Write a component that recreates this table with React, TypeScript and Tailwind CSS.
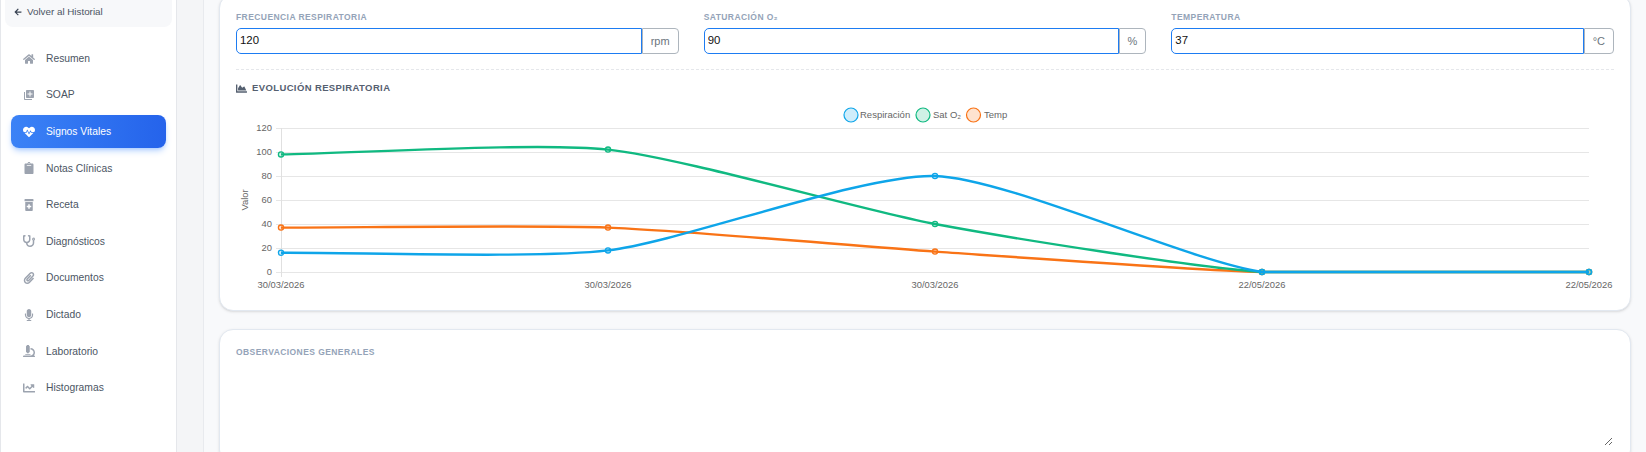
import React from 'react';
import {
  FaHome,
  FaHeartbeat,
  FaClipboard,
  FaPrescriptionBottleAlt,
  FaStethoscope,
  FaPaperclip,
  FaMicrophone,
  FaMicroscope,
  FaChartLine,
  FaChartArea,
  FaArrowLeft,
} from 'react-icons/fa';
import { MdLibraryAdd } from 'react-icons/md';

const navItems = [
  { label: 'Resumen', icon: FaHome },
  { label: 'SOAP', icon: MdLibraryAdd },
  { label: 'Signos Vitales', icon: FaHeartbeat, active: true },
  { label: 'Notas Clínicas', icon: FaClipboard },
  { label: 'Receta', icon: FaPrescriptionBottleAlt },
  { label: 'Diagnósticos', icon: FaStethoscope },
  { label: 'Documentos', icon: FaPaperclip },
  { label: 'Dictado', icon: FaMicrophone },
  { label: 'Laboratorio', icon: FaMicroscope },
  { label: 'Histogramas', icon: FaChartLine },
];

const fields = [
  { label: 'Frecuencia respiratoria', value: '120', unit: 'rpm' },
  { label: 'Saturación O₂', value: '90', unit: '%' },
  { label: 'Temperatura', value: '37', unit: '°C' },
];

// chart geometry (px inside the svg)
const W = 1378;
const H = 196;
const TOP = 28;
const BOTTOM = 172;
const LEFT = 45;
const RIGHT = 1353;
const xs = [45, 372, 699, 1026, 1353];
const yOf = (v: number) => BOTTOM - v * 1.2;
const dates = ['30/03/2026', '30/03/2026', '30/03/2026', '22/05/2026', '22/05/2026'];

const series = [
  { name: 'Respiración', color: '#0ea5e9', fill: 'rgba(14,165,233,0.2)', values: [16, 18, 80, 0, 0] },
  { name: 'Sat O₂', color: '#10b981', fill: 'rgba(16,185,129,0.2)', values: [98, 102, 40, 0, 0] },
  { name: 'Temp', color: '#f97316', fill: 'rgba(249,115,22,0.2)', values: [37, 37, 17, 0, 0] },
];

const clamp = (v: number, lo: number, hi: number) => Math.min(Math.max(v, lo), hi);

// same spline maths as chart.js line tension
function curve(values: number[], t = 0.22) {
  const pts = values.map((v, i) => ({ x: xs[i], y: yOf(v) }));
  const cps = pts.map((cur, i) => {
    const prev = pts[Math.max(i - 1, 0)];
    const next = pts[Math.min(i + 1, pts.length - 1)];
    const d01 = Math.hypot(cur.x - prev.x, cur.y - prev.y);
    const d12 = Math.hypot(next.x - cur.x, next.y - cur.y);
    let s01 = d01 / (d01 + d12);
    let s12 = d12 / (d01 + d12);
    if (isNaN(s01)) s01 = 0;
    if (isNaN(s12)) s12 = 0;
    const fa = t * s01;
    const fb = t * s12;
    return {
      px: clamp(cur.x - fa * (next.x - prev.x), LEFT, RIGHT),
      py: clamp(cur.y - fa * (next.y - prev.y), TOP, BOTTOM),
      nx: clamp(cur.x + fb * (next.x - prev.x), LEFT, RIGHT),
      ny: clamp(cur.y + fb * (next.y - prev.y), TOP, BOTTOM),
    };
  });
  let d = `M${pts[0].x},${pts[0].y}`;
  for (let i = 1; i < pts.length; i++) {
    d += ` C${cps[i - 1].nx},${cps[i - 1].ny} ${cps[i].px},${cps[i].py} ${pts[i].x},${pts[i].y}`;
  }
  return d;
}

const legend = [
  { cx: 615, tx: 624 },
  { cx: 687, tx: 697 },
  { cx: 737.5, tx: 748 },
];

const Chart: React.FC = () => (
  <svg width={W} height={H} className="block">
    {/* legend */}
    {series.map((s, i) => (
      <g key={s.name}>
        <circle cx={legend[i].cx} cy={15} r={7} fill={s.fill} stroke={s.color} strokeWidth={1.2} />
        <text x={legend[i].tx} y={18.3} fontSize={9.5} fill="#666">
          {s.name}
        </text>
      </g>
    ))}

    {/* y grid + ticks */}
    {[0, 20, 40, 60, 80, 100, 120].map((v) => (
      <g key={v}>
        <line x1={40} x2={RIGHT} y1={yOf(v) + 0.5} y2={yOf(v) + 0.5} stroke="#e6e6e6" strokeWidth={1} />
        <text x={36} y={yOf(v) + 3.3} fontSize={9.4} fill="#666" textAnchor="end">
          {v}
        </text>
      </g>
    ))}
    <line x1={LEFT + 0.5} x2={LEFT + 0.5} y1={TOP} y2={BOTTOM + 5} stroke="#e0e0e0" strokeWidth={1} />
    <text x={12} y={100} fontSize={9.4} fill="#666" textAnchor="middle" transform="rotate(-90 12 100)">
      Valor
    </text>

    {/* x labels */}
    {dates.map((d, i) => (
      <text key={i} x={xs[i]} y={188.3} fontSize={9.4} fill="#666" textAnchor="middle">
        {d}
      </text>
    ))}

    {/* datasets, first one drawn on top */}
    {[...series].reverse().map((s) => (
      <g key={s.name}>
        <path d={curve(s.values)} fill="none" stroke={s.color} strokeWidth={2.4} />
        {s.values.map((v, i) => (
          <circle key={i} cx={xs[i]} cy={yOf(v)} r={2.6} fill={s.fill} stroke={s.color} strokeWidth={1.3} />
        ))}
      </g>
    ))}
  </svg>
);

export default function App() {
  return (
    <div className="flex h-[452px] overflow-hidden bg-[#f8f9fb] font-['Liberation_Sans',Arial,sans-serif]">
      <aside className="w-[177px] shrink-0 border-x border-[#e5e7eb] bg-white">
        <div className="px-[4px]">
          <div className="flex h-[27px] items-center gap-[5px] rounded-b-lg bg-[#f7f8fa] pb-[3px] pl-[9px] text-[9.8px] text-[#4b5563]">
            <FaArrowLeft size={8} className="text-[#374151]" />
            Volver al Historial
          </div>
        </div>
        <nav className="flex flex-col gap-[3.6px] px-[10px] pt-[15px]">
          {navItems.map(({ label, icon: Icon, active }) => (
            <div
              key={label}
              className={`flex h-[33px] items-center gap-[11px] rounded-lg pl-[12px] text-[10.3px] ${
                active
                  ? 'bg-gradient-to-r from-[#3b82f6] to-[#2563eb] text-white shadow-md shadow-blue-500/30'
                  : 'text-[#4b5563]'
              }`}
            >
              <span className={`flex w-[12px] justify-center ${active ? 'text-white' : 'text-[#9ca3af]'}`}>
                <Icon size={12} />
              </span>
              {label}
            </div>
          ))}
        </nav>
      </aside>

      <div className="w-[26px] shrink-0 bg-[#f4f5f7]" />

      <main className="flex-1 border-l border-[#e8eaee] px-[15px]">
        <section className="-mt-[6px] rounded-[14px] border border-[#e2e8f0] bg-white px-[16px] pb-[14px] pt-[16px] shadow-sm">
          <div className="grid grid-cols-3 gap-x-[25px]">
            {fields.map((f) => (
              <div key={f.label}>
                <div className="mb-[5px] h-[12px] text-[8.5px] leading-[12px] font-bold uppercase tracking-[0.05em] text-[#94a3b8]">
                  {f.label}
                </div>
                <div className="flex h-[26px]">
                  <input
                    defaultValue={f.value}
                    className="min-w-0 flex-1 rounded-l-[5px] border border-[#1d7cf2] bg-white px-[3px] text-[11.4px] text-[#111] outline-none"
                  />
                  <span className="flex items-center rounded-r-[4px] border border-[#adb5bd] px-2 text-[11px] text-[#6c757d]">
                    {f.unit}
                  </span>
                </div>
              </div>
            ))}
          </div>

          <div className="mt-[15px] border-t border-dashed border-[#e5e7eb] pt-[11px]">
            <div className="flex h-[14px] items-center gap-[5px] text-[9.5px] font-bold uppercase tracking-[0.04em] text-[#556070]">
              <FaChartArea size={11} />
              Evolución respiratoria
            </div>
            <div className="mt-[5px]">
              <Chart />
            </div>
          </div>
        </section>

        <section className="mt-[18px] rounded-[14px] border border-[#e2e8f0] bg-white px-[16px] pt-[16px] pb-[16px] shadow-sm">
          <div className="mb-2 h-[12px] text-[8.5px] leading-[12px] font-bold uppercase tracking-[0.05em] text-[#94a3b8]">
            Observaciones generales
          </div>
          <textarea className="block h-[81px] w-full resize-y border border-transparent bg-transparent text-[11px] outline-none" />
        </section>
      </main>
    </div>
  );
}
